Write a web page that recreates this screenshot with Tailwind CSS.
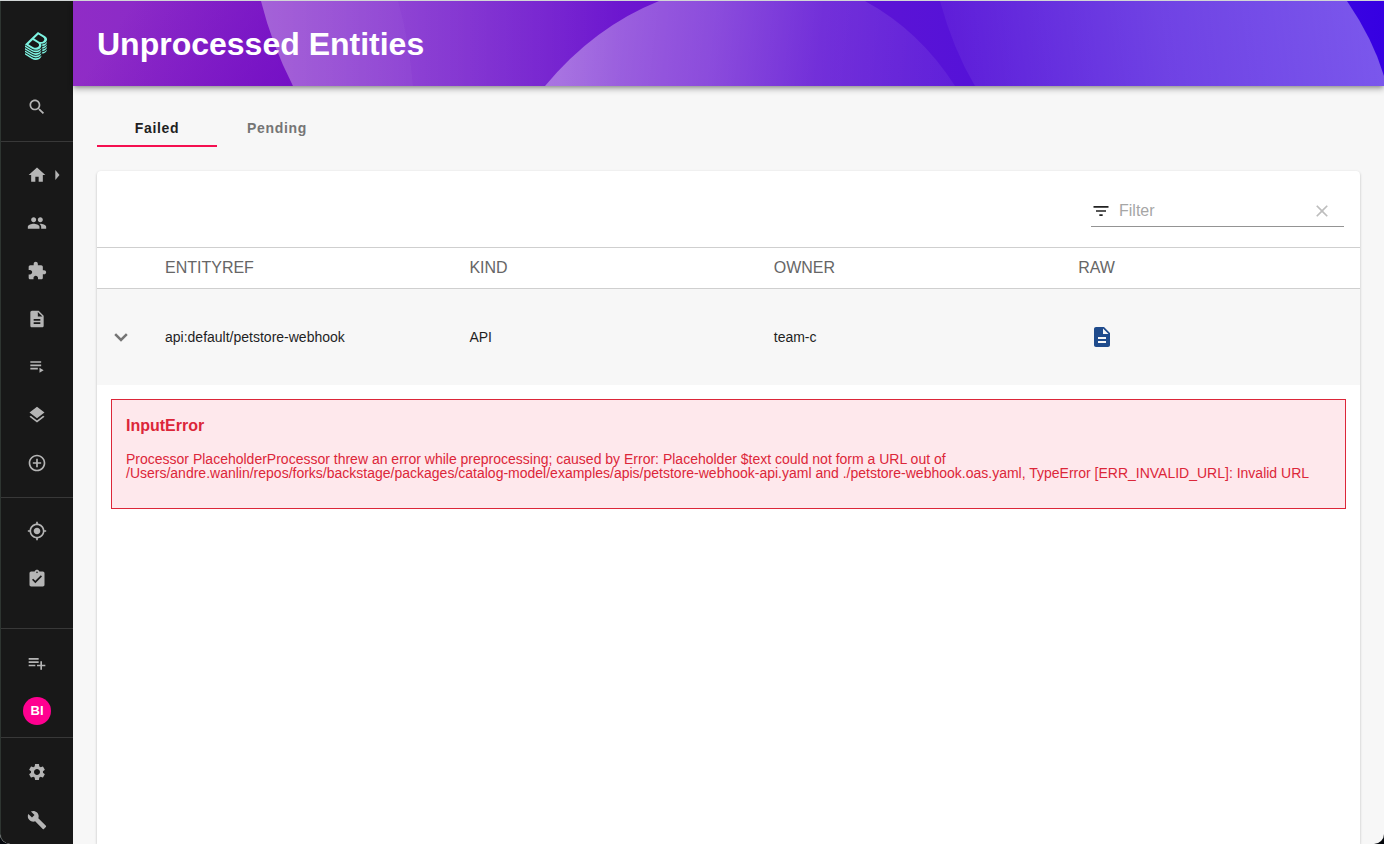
<!DOCTYPE html>
<html lang="en">
<head>
<meta charset="utf-8">
<meta name="viewport" content="width=device-width, initial-scale=1">
<title>Unprocessed Entities</title>
<script src="https://cdn.jsdelivr.net/npm/@tailwindcss/browser@4"></script>
</head>
<body class="bg-[#04070c] font-['Liberation_Sans',Arial,sans-serif] text-[#1f1f1f]">
<div class="flex h-screen flex-col overflow-hidden rounded-b-[10px] border-t border-[#d2d6d6] bg-[#f7f7f7]">
<div class="flex min-h-0 flex-1">

<nav aria-label="Main" class="flex w-[73px] shrink-0 flex-col overflow-hidden rounded-bl-[10px] border-l border-[#2e3531] bg-[#181818] text-[#b5b5b5]">
  <a href="#" aria-label="Backstage" class="mt-[31px] mb-[23px] flex justify-center pr-0.5 text-[#7df3e1]">
    <svg class="h-7 w-[22px]" viewBox="0 0 337.46 428.5" fill="currentColor"><path d="M303,166.05a80.69,80.69,0,0,0,13.45-10.37c.79-.77,1.55-1.53,2.3-2.3a83.12,83.12,0,0,0,7.93-9.38A63.69,63.69,0,0,0,333,133.23a48.58,48.58,0,0,0,4.35-16.4c1.49-19.39-10-38.67-35.62-54.22L198.56,0,78.3,115.23,0,190.25l108.6,65.91a111.59,111.59,0,0,0,57.76,16.41c24.92,0,48.8-8.8,66.42-25.69,19.16-18.36,25.52-42.12,13.7-61.87a49.22,49.22,0,0,0-6.8-8.87A89.17,89.17,0,0,0,259,178.29h.15a85.08,85.08,0,0,0,31-5.79A80.88,80.88,0,0,0,303,166.05ZM202.45,225.86c-19.32,18.51-50.4,21.23-75.7,5.9L51.61,186.15l67.45-64.64,76.41,46.38C223,184.58,221.49,207.61,202.45,225.86Zm8.93-82.22-70.65-42.89L205.14,39,274.51,81.1c25.94,15.72,29.31,37,10.55,55A60.69,60.69,0,0,1,211.38,143.64Zm29.86,190c-19.57,18.75-46.17,29.09-74.88,29.09a123.73,123.73,0,0,1-64.1-18.2L0,282.52v24.67L108.6,373.1a111.6,111.6,0,0,0,57.76,16.42c24.92,0,48.8-8.81,66.42-25.69,12.88-12.34,20-27.13,19.68-41.49v-1.79A87.27,87.27,0,0,1,241.24,333.68Zm0-39c-19.57,18.75-46.17,29.08-74.88,29.08a123.81,123.81,0,0,1-64.1-18.19L0,243.53v24.68l108.6,65.91a111.6,111.6,0,0,0,57.76,16.42c24.92,0,48.8-8.81,66.42-25.69,12.88-12.34,20-27.13,19.68-41.5v-1.78A87.27,87.27,0,0,1,241.24,294.7Zm0-39c-19.57,18.76-46.17,29.09-74.88,29.09a123.81,123.81,0,0,1-64.1-18.19L0,204.55v24.68l108.6,65.91a111.59,111.59,0,0,0,57.76,16.41c24.92,0,48.8-8.8,66.42-25.68,12.88-12.35,20-27.13,19.68-41.5v-1.82A86.09,86.09,0,0,1,241.24,255.71Zm83.7,25.74a94.15,94.15,0,0,1-60.2,25.86h0V334a81.6,81.6,0,0,0,51.74-22.37c14-13.38,21.14-28.11,21-42.64v-2.19A94.92,94.92,0,0,1,324.94,281.45Zm-83.7,91.21c-19.57,18.76-46.17,29.09-74.88,29.09a123.73,123.73,0,0,1-64.1-18.2L0,321.5v24.68l108.6,65.9a111.6,111.6,0,0,0,57.76,16.42c24.92,0,48.8-8.8,66.42-25.69,12.88-12.34,20-27.13,19.68-41.49v-1.79A86.29,86.29,0,0,1,241.24,372.66ZM327,162.45c-.68.69-1.35,1.38-2.05,2.06a94.37,94.37,0,0,1-10.64,8.65,91.35,91.35,0,0,1-11.6,7,94.53,94.53,0,0,1-26.24,8.71,97.69,97.69,0,0,1-14.16,1.57c.5,1.61.9,3.25,1.25,4.9a53.27,53.27,0,0,1,1.14,12V217h.05a84.41,84.41,0,0,0,25.35-5.55,81,81,0,0,0,26.39-16.82c.8-.77,1.5-1.56,2.26-2.34a82.08,82.08,0,0,0,7.93-9.38A63.76,63.76,0,0,0,333,172.17a48.55,48.55,0,0,0,4.32-16.45c.09-1.23.2-2.47.19-3.7V150q-1.08,1.54-2.25,3.09A96.73,96.73,0,0,1,327,162.45Zm0,77.92c-.69.7-1.31,1.41-2,2.1a94.2,94.2,0,0,1-60.2,25.86h0l0,26.67h0a81.6,81.6,0,0,0,51.74-22.37A73.51,73.51,0,0,0,333,250.13a48.56,48.56,0,0,0,4.32-16.44c.09-1.24.2-2.47.19-3.71v-2.19c-.74,1.07-1.46,2.15-2.27,3.21A95.68,95.68,0,0,1,327,240.37Zm0-39c-.69.7-1.31,1.41-2,2.1a93.18,93.18,0,0,1-10.63,8.65,91.63,91.63,0,0,1-11.63,7,95.47,95.47,0,0,1-37.94,10.18h0V256h0a81.65,81.65,0,0,0,51.74-22.37c.8-.77,1.5-1.56,2.26-2.34a82.08,82.08,0,0,0,7.93-9.38A63.76,63.76,0,0,0,333,211.15a48.56,48.56,0,0,0,4.32-16.44c.09-1.24.2-2.48.19-3.71v-2.2c-.74,1.08-1.46,2.16-2.27,3.22A95.68,95.68,0,0,1,327,201.39Z"/></svg>
  </a>
  <button aria-label="Search" class="flex h-12 shrink-0 items-center justify-center"><svg class="size-5" viewBox="0 0 24 24" fill="currentColor"><path d="M15.5 14h-.79l-.28-.27C15.41 12.59 16 11.11 16 9.500 16 5.910 13.090 3 9.500 3S3 5.910 3 9.500 5.910 16 9.500 16c1.610 0 3.090-.59 4.230-1.570l.27.28v.79l5 4.990L20.490 19l-4.990-5zm-6 0C7.010 14 5 11.990 5 9.500S7.010 5 9.500 5 14 7.010 14 9.500 11.990 14 9.500 14z"/></svg></button>
  <hr class="mt-2.5 mb-[9px] border-[#383838]">
  <a href="#" aria-label="Home" class="relative flex h-12 shrink-0 items-center justify-center"><svg class="size-5" viewBox="0 0 24 24" fill="currentColor"><path d="M10 20v-6h4v6h5v-8h3L12 3 2 12h3v8z"/></svg><svg class="absolute right-[6px] size-5" viewBox="0 0 24 24" fill="currentColor"><path d="M10 18l5-6-5-6v12z"/></svg></a>
  <a href="#" aria-label="My Groups" class="flex h-12 shrink-0 items-center justify-center"><svg class="size-5" viewBox="0 0 24 24" fill="currentColor"><path d="M16 11c1.660 0 2.990-1.340 2.990-3S17.660 5 16 5c-1.660 0-3 1.340-3 3s1.340 3 3 3zm-8 0c1.660 0 2.990-1.340 2.990-3S9.660 5 8 5C6.340 5 5 6.340 5 8s1.340 3 3 3zm0 2c-2.330 0-7 1.170-7 3.500V19h14v-2.500c0-2.330-4.670-3.500-7-3.500zm8 0c-.29 0-.62.020-.97.050 1.160.84 1.970 1.970 1.970 3.450V19h6v-2.500c0-2.330-4.670-3.500-7-3.500z"/></svg></a>
  <a href="#" aria-label="APIs" class="flex h-12 shrink-0 items-center justify-center"><svg class="size-5" viewBox="0 0 24 24" fill="currentColor"><path d="M20.500 11H19V7c0-1.100-.9-2-2-2h-4V3.500C13 2.120 11.880 1 10.500 1S8 2.120 8 3.500V5H4c-1.100 0-1.990.9-1.990 2v3.800H3.500c1.490 0 2.700 1.210 2.700 2.700s-1.210 2.700-2.700 2.700H2V20c0 1.100.9 2 2 2h3.800v-1.500c0-1.490 1.210-2.700 2.700-2.700 1.490 0 2.700 1.210 2.700 2.700V22H17c1.100 0 2-.9 2-2v-4h1.500c1.380 0 2.500-1.120 2.500-2.500S21.880 11 20.500 11z"/></svg></a>
  <a href="#" aria-label="Docs" class="flex h-12 shrink-0 items-center justify-center"><svg class="size-5" viewBox="0 0 24 24" fill="currentColor"><path d="M14 2H6c-1.100 0-1.990.9-1.990 2L4 20c0 1.100.89 2 1.990 2H18c1.100 0 2-.9 2-2V8l-6-6zm2 16H8v-2h8v2zm0-4H8v-2h8v2zm-3-5V3.500L18.500 9H13z"/></svg></a>
  <a href="#" aria-label="Playlists" class="flex h-12 shrink-0 items-center justify-center"><svg class="size-5" viewBox="0 0 24 24" fill="currentColor"><path d="M4 9h13v2H4zm0-4h13v2H4zm0 8h9v2H4zm11 0v6l5-3z"/></svg></a>
  <a href="#" aria-label="Layers" class="flex h-12 shrink-0 items-center justify-center"><svg class="size-5" viewBox="0 0 24 24" fill="currentColor"><path d="M11.990 18.540l-7.370-5.730L3 14.070l9 7 9-7-1.630-1.270-7.380 5.740zM12 16l7.360-5.730L21 9l-9-7-9 7 1.630 1.270L12 16z"/></svg></a>
  <a href="#" aria-label="Create" class="flex h-12 shrink-0 items-center justify-center"><svg class="size-5" viewBox="0 0 24 24" fill="currentColor"><path d="M13 7h-2v4H7v2h4v4h2v-4h4v-2h-4V7zm-1-5C6.480 2 2 6.480 2 12s4.480 10 10 10 10-4.480 10-10S17.520 2 12 2zm0 18c-4.410 0-8-3.590-8-8s3.590-8 8-8 8 3.590 8 8-3.590 8-8 8z"/></svg></a>
  <hr class="mt-2.5 mb-[9px] border-[#383838]">
  <a href="#" aria-label="Tech Radar" class="flex h-12 shrink-0 items-center justify-center"><svg class="size-5" viewBox="0 0 24 24" fill="currentColor"><path d="M12 8c-2.210 0-4 1.790-4 4s1.790 4 4 4 4-1.790 4-4-1.790-4-4-4zm8.940 3c-.46-4.170-3.770-7.480-7.940-7.940V1h-2v2.060C6.830 3.520 3.520 6.830 3.060 11H1v2h2.060c.46 4.170 3.770 7.480 7.940 7.940V23h2v-2.060c4.170-.46 7.480-3.770 7.940-7.940H23v-2h-2.060zM12 19c-3.870 0-7-3.130-7-7s3.130-7 7-7 7 3.130 7 7-3.130 7-7 7z"/></svg></a>
  <a href="#" aria-label="Cost Insights" class="flex h-12 shrink-0 items-center justify-center"><svg class="size-5" viewBox="0 0 24 24" fill="currentColor"><path d="M19 3h-4.180C14.400 1.840 13.300 1 12 1c-1.300 0-2.400.84-2.820 2H5c-1.100 0-2 .9-2 2v14c0 1.100.9 2 2 2h14c1.100 0 2-.9 2-2V5c0-1.100-.9-2-2-2zm-7 0c.55 0 1 .45 1 1s-.45 1-1 1-1-.45-1-1 .45-1 1-1zm-2 14l-4-4 1.410-1.410L10 14.170l6.590-6.590L18 9l-8 8z"/></svg></a>
  <hr class="mt-auto mb-2.5 border-[#383838]">
  <a href="#" aria-label="Add to playlist" class="flex h-12 shrink-0 items-center justify-center"><svg class="size-5" viewBox="0 0 24 24" fill="currentColor"><path d="M14 10H2v2h12v-2zm0-4H2v2h12V6zm4 8v-4h-2v4h-4v2h4v4h2v-4h4v-2h-4zM2 16h8v-2H2v2z"/></svg></a>
  <a href="#" aria-label="Profile" class="flex h-12 shrink-0 items-center justify-center"><span class="flex size-7 items-center justify-center rounded-full bg-[#ff0090] text-[13px] font-bold text-white">BI</span></a>
  <hr class="mt-0.5 mb-2.5 border-[#383838]">
  <a href="#" aria-label="Settings" class="flex h-12 shrink-0 items-center justify-center"><svg class="size-5" viewBox="0 0 24 24" fill="currentColor"><path d="M19.140 12.940c.04-.3.060-.61.060-.94 0-.32-.02-.64-.07-.94l2.030-1.580c.18-.14.230-.41.120-.61l-1.920-3.320c-.12-.22-.37-.29-.59-.22l-2.390.96c-.5-.38-1.030-.7-1.620-.94l-.36-2.540c-.04-.24-.24-.41-.48-.41h-3.840c-.24 0-.43.170-.47.410l-.36 2.540c-.59.240-1.130.570-1.620.940l-2.390-.96c-.22-.08-.47 0-.59.220L2.740 8.870c-.12.210-.08.470.120.610l2.030 1.580c-.05.3-.09.63-.09.94s.02.64.070.94l-2.030 1.580c-.18.140-.23.410-.12.610l1.920 3.320c.12.220.37.290.59.220l2.390-.96c.5.380 1.030.7 1.620.94l.36 2.540c.05.240.24.410.48.410h3.840c.24 0 .44-.17.470-.41l.36-2.540c.59-.24 1.130-.56 1.620-.94l2.390.96c.22.080.47 0 .59-.22l1.920-3.320c.12-.22.070-.47-.12-.61l-2.010-1.580zM12 15.600c-1.980 0-3.600-1.620-3.600-3.600s1.620-3.600 3.600-3.600 3.600 1.620 3.600 3.600-1.620 3.600-3.600 3.600z"/></svg></a>
  <a href="#" aria-label="Devtools" class="flex h-12 shrink-0 items-center justify-center"><svg class="size-5" viewBox="0 0 24 24" fill="currentColor"><path d="M22.700 19l-9.100-9.100c.9-2.300.4-5-1.500-6.900-2-2-5-2.400-7.400-1.300L9 6 6 9 1.600 4.700C.4 7.100.9 10.100 2.900 12.100c1.900 1.900 4.600 2.400 6.900 1.500l9.100 9.100c.4.4 1 .4 1.400 0l2.300-2.300c.5-.4.5-1.100.1-1.400z"/></svg></a>
</nav>

<div class="flex min-w-0 flex-1 flex-col">
  <header class="relative flex h-[85px] shrink-0 items-center bg-linear-to-r from-[#902cc6] via-[#6a13d0] via-45% to-[#3600e2] px-6 shadow-[0_2px_4px_-1px_rgba(0,0,0,0.3),0_4px_6px_rgba(0,0,0,0.2)]">
    <svg aria-hidden="true" class="absolute inset-0 size-full" viewBox="0 0 1311 85" preserveAspectRatio="none">
      <defs>
        <linearGradient id="shade" gradientUnits="userSpaceOnUse" x1="60" y1="0" x2="215" y2="100"><stop offset="0" stop-color="#7405be" stop-opacity="0"/><stop offset="1" stop-color="#7008c4" stop-opacity=".75"/></linearGradient>
        <linearGradient id="a" gradientUnits="userSpaceOnUse" x1="190" y1="0" x2="550" y2="0"><stop offset="0" stop-color="#fff" stop-opacity=".25"/><stop offset=".5" stop-color="#fff" stop-opacity=".12"/><stop offset="1" stop-color="#fff" stop-opacity="0"/></linearGradient>
        <linearGradient id="b" gradientUnits="userSpaceOnUse" x1="490" y1="40" x2="880" y2="85"><stop offset="0" stop-color="#fff" stop-opacity=".36"/><stop offset=".38" stop-color="#fff" stop-opacity=".24"/><stop offset=".65" stop-color="#fff" stop-opacity=".12"/><stop offset="1" stop-color="#fff" stop-opacity=".06"/></linearGradient>
        <linearGradient id="c" gradientUnits="userSpaceOnUse" x1="880" y1="70" x2="1300" y2="10"><stop offset="0" stop-color="#fff" stop-opacity=".05"/><stop offset=".5" stop-color="#fff" stop-opacity=".22"/><stop offset="1" stop-color="#fff" stop-opacity=".34"/></linearGradient>
      </defs>
      <path fill="url(#shade)" d="M0 0H188Q199 44 220 85H0z"/>
      <path fill="url(#a)" d="M188 0Q199 44 220 85H560V0z"/>
      <path fill="#fff" fill-opacity=".03" d="M188 0Q199 44 220 85H340Q336 38 325 0z"/>
      <path fill="url(#b)" d="M472 85Q521 26 586 0H792Q847 30 882 85z"/>
      <path fill="url(#c)" d="M867 0Q880 48 902 85H1311V75Q1300 38 1274 0z"/>
    </svg>
    <h1 class="relative text-[32px] leading-9 font-bold text-white">Unprocessed Entities</h1>
  </header>

  <main class="flex min-h-0 flex-1 flex-col p-6 pb-0">
    <div role="tablist" class="mb-6 flex text-sm font-bold tracking-wider text-[#757575]">
      <button role="tab" aria-selected="true" class="w-[120px] border-b-2 border-[#f50f50] pt-[9px] pb-2 leading-[18px] text-[#1f1f1f]">Failed</button>
      <button role="tab" aria-selected="false" class="w-[120px] border-b-2 border-transparent pt-[9px] pb-2 leading-[18px]">Pending</button>
    </div>

    <section class="flex-1 rounded-t bg-white shadow-[0_1px_3px_rgba(0,0,0,0.2),0_1px_1px_rgba(0,0,0,0.12)]">
      <div class="flex h-[76px] items-center justify-end px-4 pt-1">
        <label class="flex h-8 w-[253px] items-center border-b border-[#949494]">
          <svg class="size-5 shrink-0 text-[#222]" viewBox="0 0 24 24" fill="currentColor"><path d="M10 18h4v-2h-4v2zM3 6v2h18V6H3zm3 7h12v-2H6v2z"/></svg>
          <input type="text" aria-label="Filter" placeholder="Filter" class="ml-2 min-w-0 flex-1 bg-transparent text-base outline-none placeholder:text-[#a6a6a6]">
          <button aria-label="Clear filter" class="mr-3 flex size-5 items-center justify-center text-[#bdbdbd]"><svg class="size-5" viewBox="0 0 24 24" fill="currentColor"><path d="M19 6.410L17.590 5 12 10.590 6.410 5 5 6.410 10.590 12 5 17.590 6.410 19 12 13.410 17.590 19 19 17.590 13.410 12z"/></svg></button>
        </label>
      </div>
      <table class="w-full table-fixed border-collapse text-left">
        <colgroup><col class="w-12"><col class="w-[24.1%]"><col class="w-[24.1%]"><col class="w-[24.1%]"><col></colgroup>
        <thead>
          <tr class="h-[41px] border-y border-[#cfcfcf] text-base text-[#666]">
            <th></th><th class="px-5 font-normal">ENTITYREF</th><th class="px-5 font-normal">KIND</th><th class="px-5 font-normal">OWNER</th><th class="px-5 font-normal">RAW</th>
          </tr>
        </thead>
        <tbody>
          <tr class="h-24 bg-[#f7f7f7] text-sm">
            <td><button aria-label="Toggle details" class="flex size-12 items-center justify-center text-[#757575]"><svg class="size-5" viewBox="0 0 24 24" fill="none" stroke="currentColor" stroke-width="3"><path d="M5 8.500L12 15.500 19 8.500"/></svg></button></td>
            <td class="px-5">api:default/petstore-webhook</td><td class="px-5">API</td><td class="px-5">team-c</td>
            <td class="px-5"><button aria-label="View raw" class="flex size-12 items-center justify-center text-[#1f4b8c]"><svg class="size-6" viewBox="0 0 24 24" fill="currentColor"><path d="M14 2H6c-1.100 0-1.990.9-1.990 2L4 20c0 1.100.89 2 1.990 2H18c1.100 0 2-.9 2-2V8l-6-6zm2 16H8v-2h8v2zm0-4H8v-2h8v2zm-3-5V3.500L18.500 9H13z"/></svg></button></td>
          </tr>
        </tbody>
      </table>
      <div role="alert" class="m-3.5 border border-[#dc2639] bg-[#fee8ec] px-3.5 pt-4 pb-7 text-[#dc2639]">
        <h2 class="text-base leading-5 font-bold">InputError</h2>
        <p class="mt-4 text-sm leading-[14px]">Processor PlaceholderProcessor threw an error while preprocessing; caused by Error: Placeholder $text could not form a URL out of /Users/andre.wanlin/repos/forks/backstage/packages/catalog-model/examples/apis/petstore-webhook-api.yaml and ./petstore-webhook.oas.yaml, TypeError [ERR_INVALID_URL]: Invalid URL</p>
      </div>
    </section>
  </main>
</div>
</div>
</div>
</body>
</html>
